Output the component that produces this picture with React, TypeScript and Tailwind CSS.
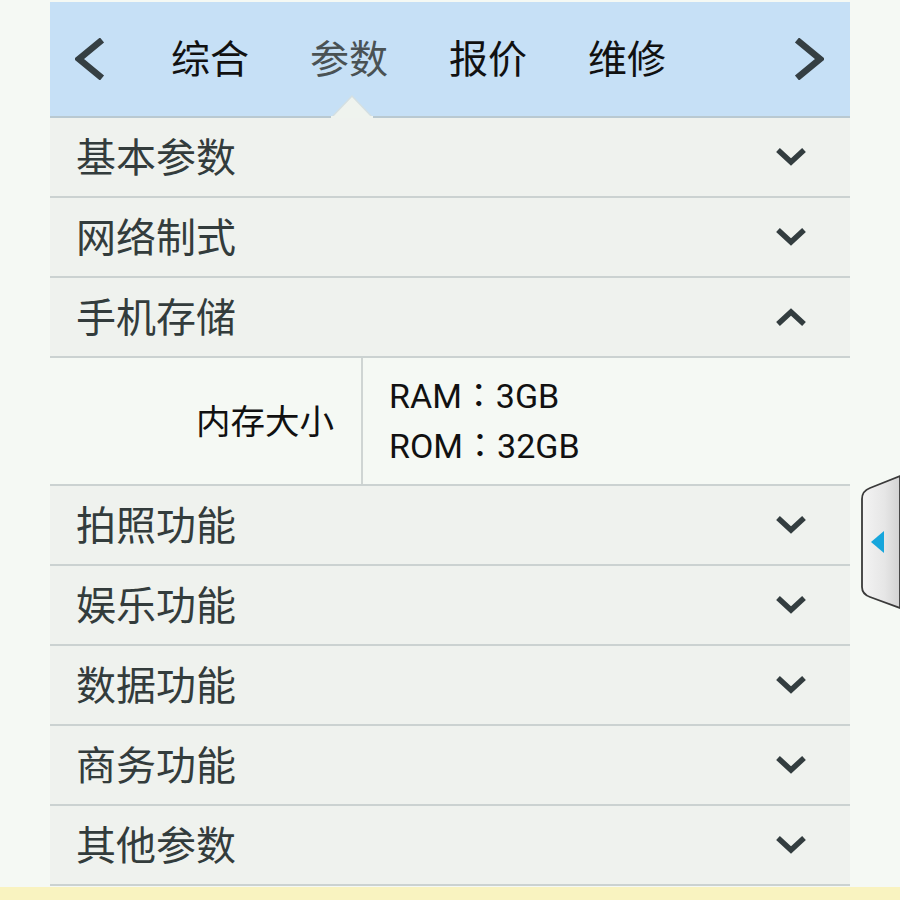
import { Fragment } from 'react'

const tabs = ['综合', '参数', '报价', '维修']

const sections = [
  { label: '基本参数' },
  { label: '网络制式' },
  { label: '手机存储', open: true },
  { label: '拍照功能' },
  { label: '娱乐功能' },
  { label: '数据功能' },
  { label: '商务功能' },
  { label: '其他参数' },
]

const cjk = "font-['Noto_Sans_CJK_SC','Noto_Sans',sans-serif]"

function Chevron({ up }: { up?: boolean }) {
  return (
    <svg viewBox="0 0 32 20" className="h-[20px] w-[32px]" fill="none" stroke="#333d3f" strokeWidth={5.5}>
      {up ? <path d="M3 17L16 5l13 12" /> : <path d="M3 3l13 12L29 3" />}
    </svg>
  )
}

function NavArrow({ right }: { right?: boolean }) {
  return (
    <svg viewBox="0 0 30 42" className="h-[42px] w-[30px]" fill="none" stroke="#353f43" strokeWidth={6.5}>
      {right ? <path d="M3 2l23 19L3 40" /> : <path d="M27 2L4 21l23 19" />}
    </svg>
  )
}

export default function App() {
  return (
    <div className={`relative flex min-h-[900px] flex-col bg-[#f5f9f4] ${cjk}`}>
      <div className="ml-[50px] w-[800px] pt-[2px]">
        <header className="relative flex h-[116px] items-center border-b-2 border-[#b9c9d1] bg-[#c6e0f6] pl-[25px]">
          <NavArrow />
          <nav className="mb-[6px] ml-[66px] flex gap-[61px] text-[39px] leading-none">
            {tabs.map((t) => (
              <span key={t} className={t === '参数' ? 'text-[#4a5254]' : 'text-[#111]'}>
                {t}
              </span>
            ))}
          </nav>
          <div className="ml-auto mr-[26px]">
            <NavArrow right />
          </div>
          <svg viewBox="0 0 42 24" className="absolute bottom-[-2px] left-[281px] h-[24px] w-[42px]">
            <path d="M0 24L21 2l21 22z" fill="#eff3ee" stroke="#d4dfe2" strokeWidth={1.5} />
            <rect x="0" y="22" width="42" height="2" fill="#eff3ee" />
          </svg>
        </header>

        {sections.map((s) => (
          <Fragment key={s.label}>
            <div className="flex h-[80px] items-center justify-between border-b-2 border-[#cbd2d1] bg-[#eff2ee] pl-[26px] pr-[43px]">
              <span className="mb-[5px] text-[40px] leading-none text-[#333c3c]">{s.label}</span>
              <Chevron up={s.open} />
            </div>
            {s.open && (
              <div className="flex h-[128px] border-b-2 border-[#cbd2d1] bg-[#f5f9f4]">
                <div className="flex w-[313px] items-center justify-end border-r-2 border-[#cfd5d3] pb-[2px] pr-[27px] text-[34.5px] text-[#111]">
                  内存大小
                </div>
                <div className="flex flex-col justify-center gap-[12px] pl-[26px] font-['Roboto','Noto_Sans_CJK_TC',sans-serif] text-[34px] leading-[38px] text-[#111]">
                  <span>RAM：3GB</span>
                  <span>ROM：32GB</span>
                </div>
              </div>
            )}
          </Fragment>
        ))}
      </div>
      <div className="mt-[1px] h-[13px] bg-[#f9f3c0]" />

      <svg viewBox="0 0 40 134" className="absolute right-0 top-[475px] h-[134px] w-[40px]">
        <defs>
          <linearGradient id="tab" x1="0" x2="1" y1="0" y2="0">
            <stop offset="0" stopColor="#f4f4f4" />
            <stop offset="0.6" stopColor="#e6e6e6" />
            <stop offset="1" stopColor="#d2d2d2" />
          </linearGradient>
        </defs>
        <path d="M40 1L10 13Q2 16 2 24v88q0 7 8 10l30 11z" fill="url(#tab)" stroke="#3a3a3a" strokeWidth={1.8} />
        <path d="M11 67l13-11v22z" fill="#17a6dc" />
      </svg>
    </div>
  )
}
